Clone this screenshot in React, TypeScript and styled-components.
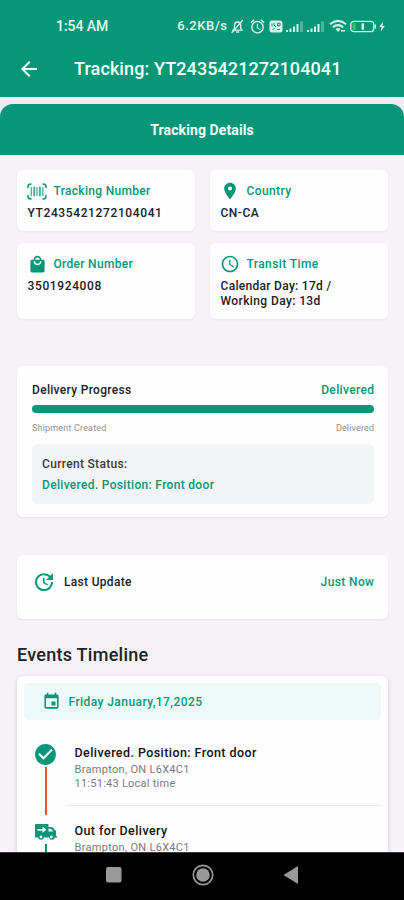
import React from 'react';
import styled, { createGlobalStyle } from 'styled-components';
import { MdArrowBack, MdLocationOn, MdEvent, MdCheckCircle, MdUpdate, MdSchedule, MdLocalMall, MdAlarm } from 'react-icons/md';

const green = '#079678';

const Global = createGlobalStyle`
  * { box-sizing: border-box; }
  body { margin: 0; font-family: Roboto, sans-serif; background: #f6f2f9; }
  svg { display: block; flex: none; }
`;

const Screen = styled.div`
  width: 404px;
  height: 900px;
  overflow: hidden;
  display: flex;
  flex-direction: column;
  background: #f6f2f8;
`;

const Label = styled.span<{ $size: number; $weight?: number; $track?: number; $color?: string; $line?: number }>`
  display: block;
  white-space: nowrap;
  font-size: ${p => p.$size}px;
  font-weight: ${p => p.$weight ?? 500};
  letter-spacing: ${p => p.$track ?? 0}px;
  margin-right: ${p => -(p.$track ?? 0)}px;
  color: ${p => p.$color ?? '#202125'};
  line-height: ${p => p.$line ?? 16}px;
`;

const Header = styled.header`
  flex: none;
  height: 97px;
  background: ${green};
  color: #f4fffb;
`;

const StatusBar = styled.div`
  height: 41px;
  padding: 11px 18px 0 56px;
  display: flex;
  align-items: center;
  justify-content: space-between;
`;

const StatusIcons = styled.div`
  display: flex;
  align-items: center;
  gap: 3.3px;
  color: #d5f2e8;
`;

const AppBar = styled.div`
  height: 56px;
  padding: 0 0 0 17px;
  display: flex;
  align-items: center;
  gap: 33px;
`;

const TabBar = styled.div`
  flex: none;
  height: 51px;
  margin-top: 7px;
  border-radius: 13px 13px 0 0;
  background: ${green};
  display: flex;
  align-items: center;
  justify-content: center;
`;

const TabShelf = styled.div`
  flex: none;
  background: #ececf4;
`;

const Content = styled.main`
  flex: 1;
  min-height: 0;
  overflow: hidden;
  padding: 15px 16px 0 17px;
`;

const Card = styled.section`
  background: #fefefe;
  border-radius: 6px;
  box-shadow: 0 1px 2px rgba(60, 40, 80, 0.07);
`;

const InfoGrid = styled.div`
  display: grid;
  grid-template-columns: 178px 178px;
  grid-template-rows: 61px 76px;
  gap: 12px 15px;
`;

const InfoCard = styled(Card)`
  padding: 12px 0 0 10.5px;
`;

const InfoHead = styled.div`
  height: 18px;
  display: flex;
  align-items: center;
  gap: 7px;
  margin-bottom: 5px;
`;

const IconSlot = styled.div`
  width: 19px;
  display: flex;
  justify-content: center;
  color: ${green};
`;

const InfoValue = styled.div<{ $double?: boolean }>`
  padding-top: ${p => (p.$double ? 1 : 0)}px;
`;

const ProgressCard = styled(Card)`
  height: 151px;
  margin-top: 47px;
  padding: 16px 14px 0 15px;
`;

const Split = styled.div`
  display: flex;
  align-items: center;
  justify-content: space-between;
`;

const Track = styled.div`
  height: 8px;
  margin: 7px 0 9px;
  border-radius: 4px;
  background: ${green};
`;

const StatusBox = styled.div`
  height: 60px;
  margin-top: 10px;
  padding: 12px 10px;
  border-radius: 6px;
  background: #f2f4f6;
`;

const UpdateCard = styled(Card)`
  height: 64px;
  margin-top: 38px;
  padding: 0 14px 10px 15px;
  display: flex;
  align-items: center;
  justify-content: space-between;
`;

const UpdateLabel = styled.div`
  display: flex;
  align-items: center;
  gap: 8px;
  color: ${green};
`;

const Heading = styled.h2`
  margin: 24px 0 9px;
`;

const TimelineCard = styled(Card)`
  height: 240px;
  padding: 7px 7px 0 7px;
  box-shadow: 0 1px 4px rgba(60, 40, 80, 0.2);
`;

const DateBand = styled.div`
  height: 37px;
  border-radius: 5px;
  background: #eefaf8;
  color: ${green};
  display: flex;
  align-items: center;
  padding-left: 17.5px;
  gap: 8px;
`;

const Events = styled.div`
  padding-top: 22px;
`;

const Event = styled.div`
  display: flex;
  height: 78px;
`;

const Rail = styled.div<{ $drop?: number }>`
  width: 43px;
  padding-top: ${p => p.$drop ?? 0}px;
  display: flex;
  flex-direction: column;
  align-items: center;
  color: ${green};
`;

const Stem = styled.div<{ $color: string; $gap?: number }>`
  width: 2px;
  height: 48px;
  margin-top: ${p => p.$gap ?? 0}px;
  background: ${p => p.$color};
`;

const EventBody = styled.div<{ $ruled?: boolean }>`
  flex: 1;
  height: 64px;
  padding: 2px 0 0 7.5px;
  border-bottom: ${p => (p.$ruled ? '1px solid #e9e9ec' : '0')};
`;

const NavBar = styled.nav`
  flex: none;
  height: 48px;
  background: #000;
  border-top: 1px solid #3c3c3c;
  padding: 0 105px 4px 105px;
  display: flex;
  align-items: center;
  justify-content: space-between;
`;

const BellOff = () => (
  <svg width="15" height="15" viewBox="0 0 15 15" fill="none" stroke="currentColor" strokeWidth="1.3" strokeLinecap="round">
    <path d="M3 11.2h9l-1.3-1.8V6.3C10.7 4 9.500 3 7.700 3S4.500 4.400 4.500 6.300v3.100zM6.500 13h2.200M12.500 1.500L2 13.500" />
  </svg>
);

const SimBadge = () => (
  <svg width="14" height="13" viewBox="0 0 14 13">
    <rect x=".5" y=".5" width="13" height="12" rx="2.500" fill="currentColor" />
    <path d="M3 3.500v3M5 3v2l2 2M8.500 3.300h2.500v2.500H8.500zM3.500 9.500l2-1M8 9.500h3" stroke={green} strokeWidth="1" fill="none" />
  </svg>
);

const Signal = () => (
  <svg width="18" height="13" viewBox="0 0 18 13" fill="currentColor">
    <rect x="0" y="10" width="2" height="2" />
    <rect x="3.500" y="8.500" width="2" height="3.500" />
    <rect x="7" y="6.500" width="2" height="5.500" />
    <rect x="10.500" y="4" width="2" height="8" />
    <rect x="14" y="1.500" width="3" height="10.500" opacity=".35" />
  </svg>
);

const Wifi = () => (
  <svg width="18" height="14" viewBox="0 0 18 14" fill="none" stroke="currentColor" strokeWidth="2">
    <path d="M1 5.300Q9-1.600 17 5.300M3.800 8.300Q9 3.900 14.200 8.300" />
    <path d="M6.500 10.200Q9 8 11.500 10.200L9 13z" fill="currentColor" stroke="none" />
    <path d="M12 11.800h4" strokeWidth="1.500" />
  </svg>
);

const Battery = () => (
  <svg width="36" height="13" viewBox="0 0 36 13" fill="none">
    <rect x=".8" y="1.300" width="23" height="10.400" rx="3" stroke="currentColor" strokeWidth="1.300" />
    <rect x="2.600" y="3" width="3" height="7" rx="1" fill="#35c95b" />
    <path d="M12.800 3.300v6.400" stroke="currentColor" strokeWidth="2.500" />
    <path d="M25.300 4.500v4" stroke="currentColor" strokeWidth="1.500" />
    <path d="M33.200 1.500l-4 5.500h2.300l-.7 4.500 4-5.500h-2.300z" fill="currentColor" />
  </svg>
);

const BarcodeFrame = () => (
  <svg width="20" height="17" viewBox="0 0 20 17" fill="none" stroke="currentColor" strokeWidth="1.500" strokeLinecap="round">
    <path d="M1 4.500V3.500Q1 1 4 1M16 1q3 0 3 2.500v1M1 12.500v1Q1 16 4 16M16 16q3 0 3-2.500v-1" />
    <path d="M4.300 4.500v8M15.800 4.500v8M10 4.500v8" strokeWidth="1.200" opacity=".8" />
    <path d="M7.200 4.500v8M12.900 4.500v8" strokeWidth="2" opacity=".75" />
  </svg>
);

const Truck = () => (
  <svg width="24" height="18" viewBox="0 0 24 18" fill="currentColor">
    <path fillRule="evenodd" d="M2 1h11.500q1 0 1 1v2h3.800l3.700 4v5h1v1.500h-2.100a2.900 2.900 0 0 1-5.700 0H9.900a2.900 2.900 0 0 1-5.700 0H2q-1 0-1-1V2q0-1 1-1zm12.500 4.700v2.700h4.800l-2.400-2.700zM3.500 6v1.700h5V10L12.300 6.800 8.500 3.500V6zM7 12.500a1.400 1.400 0 1 0 0 2.800 1.400 1.400 0 0 0 0-2.800zm10.300 0a1.400 1.400 0 1 0 0 2.800 1.400 1.400 0 0 0 0-2.800z" />
  </svg>
);

const RecentKey = () => (
  <svg width="17" height="18" viewBox="0 0 17 18">
    <rect x="1" y="1" width="15.500" height="15.500" rx="2" fill="#999" />
  </svg>
);

const HomeKey = () => (
  <svg width="22" height="22" viewBox="0 0 22 22">
    <circle cx="11" cy="11" r="9.700" stroke="#999" strokeWidth="1.700" fill="none" />
    <circle cx="11" cy="11" r="6.800" fill="#999" />
  </svg>
);

const BackKey = () => (
  <svg width="16" height="18" viewBox="0 0 16 18">
    <path d="M15 0v18L.5 9z" fill="#999" />
  </svg>
);

type InfoProps = { icon: React.ReactNode; title: string; track: number; double?: boolean; children: React.ReactNode };

const Info = ({ icon, title, track, double, children }: InfoProps) => (
  <InfoCard>
    <InfoHead>
      <IconSlot>{icon}</IconSlot>
      <Label $size={12} $track={track} $color={green}>{title}</Label>
    </InfoHead>
    <InfoValue $double={double}>{children}</InfoValue>
  </InfoCard>
);

export default function App() {
  return (
    <Screen>
      <Global />
      <Header>
        <StatusBar>
          <Label $size={14} $track={-0.05} $color="#e4f7ef">1:54 AM</Label>
          <StatusIcons>
            <Label $size={13} $track={0.5} $color="#e4f7ef">6.2KB/s</Label>
            <BellOff />
            <MdAlarm size={17} />
            <SimBadge />
            <Signal />
            <Signal />
            <Wifi />
            <Battery />
          </StatusIcons>
        </StatusBar>
        <AppBar>
          <MdArrowBack size={24} />
          <Label $size={18} $track={0.1} $color="#f4fffb" $line={22}>Tracking: YT2435421272104041</Label>
        </AppBar>
      </Header>
      <TabShelf>
        <TabBar>
          <Label $size={14} $weight={700} $track={0.1} $color="#f4fffb">Tracking Details</Label>
        </TabBar>
      </TabShelf>
      <Content>
        <InfoGrid>
          <Info icon={<BarcodeFrame />} title="Tracking Number" track={0.3}>
            <Label $size={12} $track={0.62}>YT2435421272104041</Label>
          </Info>
          <Info icon={<MdLocationOn size={20} />} title="Country" track={0.4}>
            <Label $size={12} $track={0.5}>CN-CA</Label>
          </Info>
          <Info icon={<MdLocalMall size={19} />} title="Order Number" track={0.3}>
            <Label $size={12} $track={0.62}>3501924008</Label>
          </Info>
          <Info icon={<MdSchedule size={20} />} title="Transit Time" track={0.4} double>
            <Label $size={12} $track={0.3} $line={15}>Calendar Day: 17d /</Label>
            <Label $size={12} $track={0.4} $line={15}>Working Day: 13d</Label>
          </Info>
        </InfoGrid>

        <ProgressCard>
          <Split>
            <Label $size={12} $track={0.31}>Delivery Progress</Label>
            <Label $size={12} $track={0.35} $color={green}>Delivered</Label>
          </Split>
          <Track />
          <Split>
            <Label $size={9} $weight={400} $track={0.18} $color="#909096" $line={12}>Shipment Created</Label>
            <Label $size={9} $weight={400} $track={0.14} $color="#909096" $line={12}>Delivered</Label>
          </Split>
          <StatusBox>
            <Label $size={12} $track={0.32} $color="#3a3c40">Current Status:</Label>
            <Label $size={12} $track={0.32} $color={green} $line={26}>Delivered. Position: Front door</Label>
          </StatusBox>
        </ProgressCard>

        <UpdateCard>
          <UpdateLabel>
            <MdUpdate size={24} />
            <Label $size={12} $track={0.31}>Last Update</Label>
          </UpdateLabel>
          <Label $size={12} $track={0.38} $color={green}>Just Now</Label>
        </UpdateCard>

        <Heading><Label $size={18} $track={0.27} $line={24}>Events Timeline</Label></Heading>

        <TimelineCard>
          <DateBand>
            <MdEvent size={19} />
            <Label $size={12} $track={0.43} $color={green}>Friday January,17,2025</Label>
          </DateBand>
          <Events>
            <Event>
              <Rail>
                <MdCheckCircle size={25} />
                <Stem $color="#f04a3e" />
              </Rail>
              <EventBody $ruled>
                <Label $size={12.5} $track={0.43} $color="#111" $line={18}>Delivered. Position: Front door</Label>
                <Label $size={11} $weight={400} $track={0.3} $color="#777a7e" $line={15}>Brampton, ON L6X4C1</Label>
                <Label $size={11} $weight={400} $track={0.25} $color="#777a7e" $line={14}>11:51:43 Local time</Label>
              </EventBody>
            </Event>
            <Event>
              <Rail $drop={3}>
                <Truck />
                <Stem $color={green} $gap={3} />
              </Rail>
              <EventBody>
                <Label $size={12.5} $track={0.4} $color="#111" $line={18}>Out for Delivery</Label>
                <Label $size={11} $weight={400} $track={0.3} $color="#777a7e" $line={15}>Brampton, ON L6X4C1</Label>
              </EventBody>
            </Event>
          </Events>
        </TimelineCard>
      </Content>
      <NavBar>
        <RecentKey />
        <HomeKey />
        <BackKey />
      </NavBar>
    </Screen>
  );
}
